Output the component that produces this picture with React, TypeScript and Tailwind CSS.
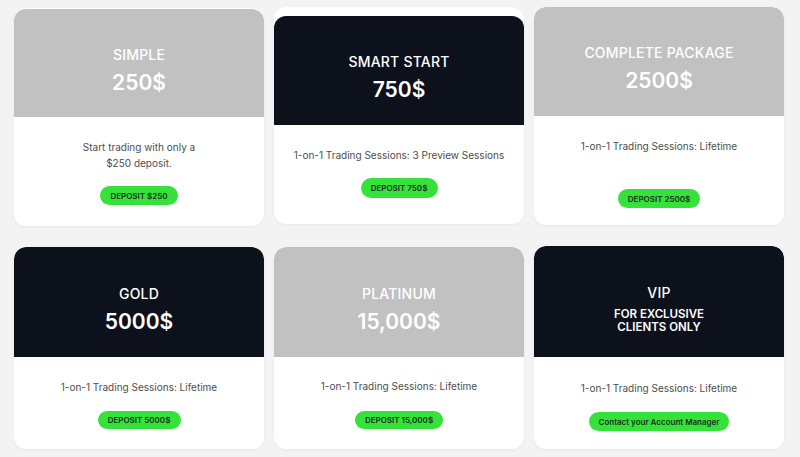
import React from "react";

type Plan = {
  key: string;
  title: string;
  price?: string;
  subtitle?: string[];
  text: string[];
  button: string;
  dark: boolean;
  // per card spacing, measured from the reference
  cardClass: string;
  headClass: string;
  bodyClass: string;
  btnClass: string;
};

const PLANS: Plan[] = [
  {
    key: "simple",
    title: "SIMPLE",
    price: "250$",
    text: ["Start trading with only a", "$250 deposit."],
    button: "DEPOSIT $250",
    dark: false,
    cardClass: "mt-[8px] pt-px",
    headClass: "h-[108px] pt-[37px]",
    bodyClass: "pt-[22px] pb-[21px] leading-[16px]",
    btnClass: "mt-[15px] h-[19px] w-[78px]",
  },
  {
    key: "smart",
    title: "SMART START",
    price: "750$",
    text: ["1-on-1 Trading Sessions: 3 Preview Sessions"],
    button: "DEPOSIT 750$",
    dark: true,
    cardClass: "mt-[7px] pt-[9px]",
    headClass: "h-[109px] pt-[37px]",
    bodyClass: "pt-[23px] pb-[26px] leading-[15px]",
    btnClass: "mt-[15px] h-[20px] w-[77px]",
  },
  {
    key: "complete",
    title: "COMPLETE PACKAGE",
    price: "2500$",
    text: ["1-on-1 Trading Sessions: Lifetime"],
    button: "DEPOSIT 2500$",
    dark: false,
    cardClass: "mt-[7px]",
    headClass: "h-[109px] pt-[37px]",
    bodyClass: "pt-[23px] pb-[17px] leading-[15px]",
    btnClass: "mt-[35px] h-[19px] w-[82px]",
  },
  {
    key: "gold",
    title: "GOLD",
    price: "5000$",
    text: ["1-on-1 Trading Sessions: Lifetime"],
    button: "DEPOSIT 5000$",
    dark: true,
    cardClass: "mt-[1px]",
    headClass: "h-[110px] pt-[38px]",
    bodyClass: "pt-[23px] pb-[20px] leading-[15px]",
    btnClass: "mt-[16px] h-[18px] w-[83px]",
  },
  {
    key: "platinum",
    title: "PLATINUM",
    price: "15,000$",
    text: ["1-on-1 Trading Sessions: Lifetime"],
    button: "DEPOSIT 15,000$",
    dark: false,
    cardClass: "mt-[1px]",
    headClass: "h-[110px] pt-[38px]",
    bodyClass: "pt-[22px] pb-[20px] leading-[15px]",
    btnClass: "mt-[17px] h-[18px] w-[88px]",
  },
  {
    key: "vip",
    title: "VIP",
    subtitle: ["FOR EXCLUSIVE", "CLIENTS ONLY"],
    text: ["1-on-1 Trading Sessions: Lifetime"],
    button: "Contact your Account Manager",
    dark: true,
    cardClass: "",
    headClass: "h-[111px] pt-[38px]",
    bodyClass: "pt-[24px] pb-[18px] leading-[15px]",
    btnClass: "mt-[16px] h-[19px] w-[140px]",
  },
];

function PlanCard({ plan }: { plan: Plan }) {
  return (
    <div
      className={`flex flex-col overflow-hidden rounded-[12px] bg-white shadow-[0_1px_3px_rgba(0,0,0,0.05)] ${plan.cardClass}`}
    >
      <div
        className={`flex flex-col items-center rounded-t-[12px] text-white ${
          plan.dark ? "bg-[#0d111b]" : "bg-[#c1c1c2]"
        } ${plan.headClass}`}
      >
        <div className="text-[14px] leading-[18px] font-medium tracking-[0.2px]">
          {plan.title}
        </div>
        {plan.price && (
          <div className="mt-[6px] text-[21px] leading-[26px] font-semibold">
            {plan.price}
          </div>
        )}
        {plan.subtitle && (
          <div className="mt-[6px] text-center text-[11.5px] leading-[13px] font-semibold">
            {plan.subtitle.map((line) => (
              <div key={line}>{line}</div>
            ))}
          </div>
        )}
      </div>
      <div className={`flex flex-col items-center ${plan.bodyClass}`}>
        <div className="text-center text-[10px] text-[#4d4d4d]">
          {plan.text.map((line) => (
            <div key={line}>{line}</div>
          ))}
        </div>
        <button
          type="button"
          className={`flex items-center justify-center rounded-full bg-[#36e23a] text-[8px] leading-none font-semibold text-[#14301a] ${plan.btnClass}`}
        >
          {plan.button}
        </button>
      </div>
    </div>
  );
}

export default function App() {
  return (
    <div
      className="h-[457px] w-[800px] overflow-hidden bg-[#f3f3f3] pl-[14px] pr-[16px]"
      style={{ fontFamily: "Inter, 'Open Sans', sans-serif" }}
    >
      <div className="grid grid-cols-3 items-start gap-x-[10px]">
        {PLANS.slice(0, 3).map((p) => (
          <PlanCard key={p.key} plan={p} />
        ))}
      </div>
      <div className="mt-[20px] grid grid-cols-3 items-start gap-x-[10px]">
        {PLANS.slice(3).map((p) => (
          <PlanCard key={p.key} plan={p} />
        ))}
      </div>
    </div>
  );
}
